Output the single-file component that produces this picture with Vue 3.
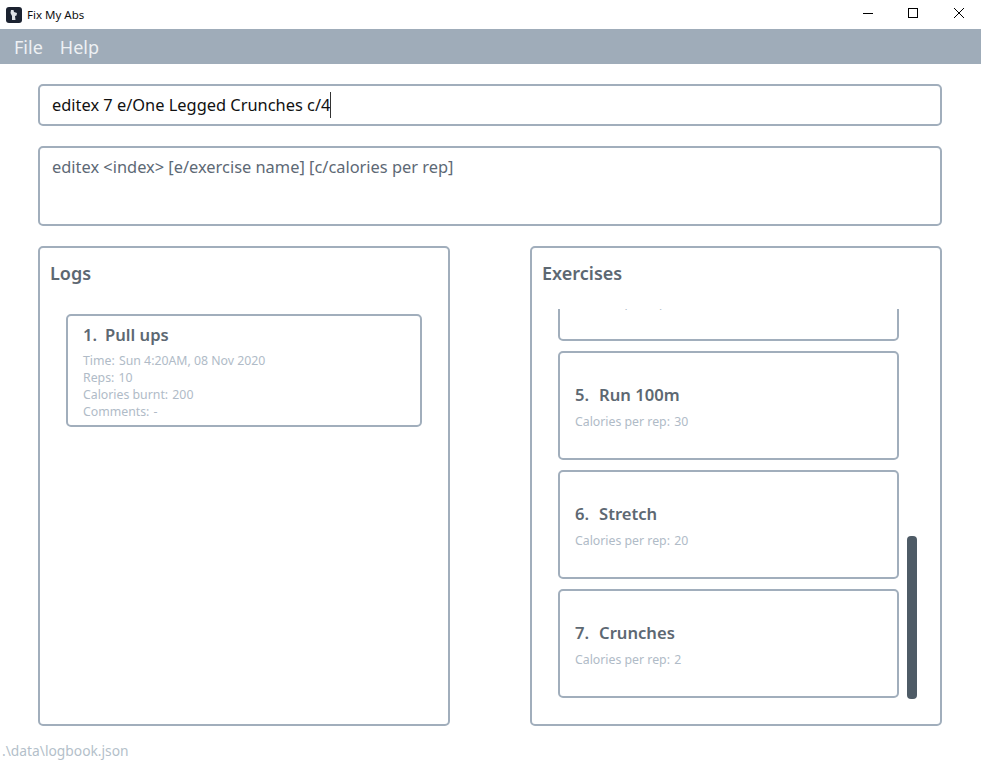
<template>
  <div class="window">
    <header class="titlebar">
      <div class="app-title">
        <svg class="app-icon" width="16" height="16" viewBox="0 0 16 16">
          <rect width="16" height="16" rx="3" fill="#1b2230" />
          <path d="M5 3 L7.5 3 L8 5 L11 6 L10.5 8.5 L9 9 L9.5 13 L6 13 L6 9 L4.5 6 Z" fill="#dfe2e6" />
        </svg>
        <span>Fix My Abs</span>
      </div>
      <div class="win-controls">
        <svg width="46" height="29" viewBox="0 0 46 29"><path d="M20 13.5 H30" stroke="#000" fill="none" /></svg>
        <svg width="46" height="29" viewBox="0 0 46 29"><rect x="19.5" y="8.5" width="9" height="9" stroke="#000" fill="none" /></svg>
        <svg width="46" height="29" viewBox="0 0 46 29"><path d="M19 8 L29 18 M29 8 L19 18" stroke="#000" fill="none" /></svg>
      </div>
    </header>

    <nav class="menubar">
      <span v-for="item in menu" :key="item">{{ item }}</span>
    </nav>

    <main class="content">
      <div class="box command-box">
        <span class="command-text">{{ command }}</span><span class="caret"></span>
      </div>
      <div class="box result-box">{{ hint }}</div>

      <div class="panels">
        <section class="box panel">
          <h2>Logs</h2>
          <div class="log-list">
            <article v-for="log in logs" :key="log.id" class="card log-card">
              <h3><span class="num">{{ log.id }}.</span>{{ log.name }}</h3>
              <p v-for="row in log.rows" :key="row.label"><span class="label">{{ row.label }}</span> {{ row.value }}</p>
            </article>
          </div>
        </section>

        <section class="box panel exercises">
          <h2>Exercises</h2>
          <div class="exercise-list">
            <article v-for="ex in exercises" :key="ex.id" class="card exercise-card">
              <h3><span class="num">{{ ex.id }}.</span>{{ ex.name }}</h3>
              <p><span class="label">Calories per rep:</span> {{ ex.calories }}</p>
            </article>
          </div>
          <div class="scroll-thumb"></div>
        </section>
      </div>
    </main>

    <footer class="status">.\data\logbook.json</footer>
  </div>
</template>

<script setup>
const menu = ['File', 'Help']
const command = 'editex 7 e/One Legged Crunches c/4'
const hint = 'editex <index> [e/exercise name] [c/calories per rep]'

const logs = [
  {
    id: 1,
    name: 'Pull ups',
    rows: [
      { label: 'Time:', value: 'Sun 4:20AM, 08 Nov 2020' },
      { label: 'Reps:', value: '10' },
      { label: 'Calories burnt:', value: '200' },
      { label: 'Comments:', value: '-' },
    ],
  },
]

const exercises = [
  { id: 4, name: 'Pull ups', calories: 20 },
  { id: 5, name: 'Run 100m', calories: 30 },
  { id: 6, name: 'Stretch', calories: 20 },
  { id: 7, name: 'Crunches', calories: 2 },
]
</script>

<style>
html,
body {
  margin: 0;
  background: #fff;
}
</style>

<style scoped>
.window {
  display: flex;
  flex-direction: column;
  width: 981px;
  height: 761px;
  overflow: hidden;
  background: #fff;
  font-family: "Noto Sans", "Open Sans", sans-serif;
}

.titlebar {
  display: flex;
  justify-content: space-between;
  height: 29px;
}

.app-title {
  display: flex;
  align-items: center;
  gap: 5px;
  padding-left: 6px;
  font-size: 11.5px;
  color: #111;
}

.win-controls {
  display: flex;
  font-size: 0;
}

.menubar {
  display: flex;
  gap: 17px;
  align-items: center;
  height: 35px;
  padding-left: 14px;
  background: #9facb9;
  color: #eef1f4;
  font-size: 18px;
}

.content {
  display: flex;
  flex-direction: column;
  gap: 20px;
  padding: 20px 39px 0 38px;
}

.box {
  box-sizing: border-box;
  border: 2px solid #a1aebc;
  border-radius: 5px;
  background: #fff;
}

.command-box {
  display: flex;
  align-items: center;
  height: 42px;
  padding-left: 12px;
  font-size: 16.4px;
  color: #111;
}

.command-text {
  margin-bottom: 2px;
}

.caret {
  width: 1px;
  height: 26px;
  background: #333;
}

.result-box {
  height: 80px;
  padding: 8px 12px;
  font-size: 16.4px;
  line-height: 22px;
  color: #5d6975;
}

.panels {
  display: grid;
  grid-template-columns: 412px 412px;
  gap: 80px;
  height: 480px;
}

.panel {
  position: relative;
  padding: 12px 10px;
}

h2 {
  margin: 0;
  font-size: 18px;
  line-height: 26px;
  font-weight: 600;
  color: #5d6872;
}

.log-list {
  padding: 28px 16px 0;
}

.card {
  box-sizing: border-box;
  border: 2px solid #a1aebc;
  border-radius: 5px;
}

.card h3 {
  margin: 0;
  font-size: 16.6px;
  font-weight: 600;
  color: #5d6872;
}

.num {
  margin-right: 8px;
}

.card p {
  margin: 0;
  font-size: 12.3px;
  line-height: 17px;
  color: #b0bbc7;
}

.label {
  margin-right: 1px;
}

.log-card {
  width: 356px;
  height: 113px;
  padding: 6px 15px;
}

.log-card h3 {
  line-height: 26px;
  margin-bottom: 4px;
}

.exercise-list {
  display: flex;
  flex-direction: column;
  justify-content: flex-end;
  gap: 10px;
  width: 341px;
  height: 389px;
  margin: 23px 0 0 16px;
  overflow: hidden;
}

.exercise-card {
  display: flex;
  flex-direction: column;
  justify-content: center;
  flex: 0 0 109px;
  padding: 0 15px;
}

.exercise-card .num {
  margin-right: 10px;
}

.exercise-card h3 {
  line-height: 26px;
  margin-bottom: 5px;
}

.scroll-thumb {
  position: absolute;
  top: 288px;
  left: 375px;
  width: 10px;
  height: 163px;
  border-radius: 4px;
  background: #4e5b66;
}

.status {
  margin-top: 15px;
  padding-left: 2px;
  font-size: 13.8px;
  line-height: 20px;
  color: #b4bfca;
}
</style>
